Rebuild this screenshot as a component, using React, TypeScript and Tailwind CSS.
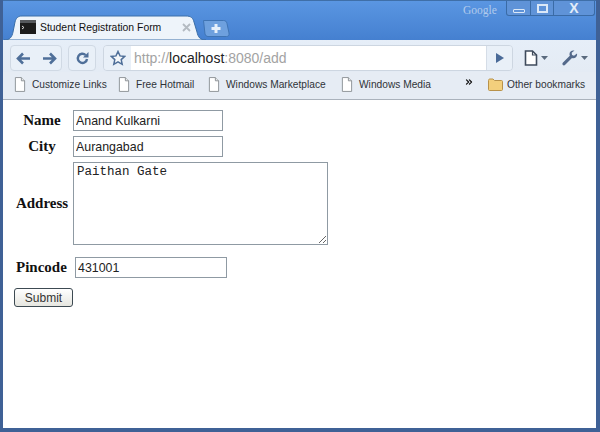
import { ChevronsRight } from 'lucide-react'

function TerminalIcon() {
  return (
    <svg width="16" height="14" viewBox="0 0 16 14" aria-hidden="true">
      <rect x="0" y="0" width="16" height="14" fill="#1c1c1c" />
      <rect x="0" y="0" width="16" height="3" fill="#55585c" />
      <path d="M2 6l2 1.500L2 9" fill="none" stroke="#ddd" strokeWidth="1" />
    </svg>
  )
}

function PageIcon({ size = 12 }: { size?: number }) {
  return (
    <svg width={size} height={size * 1.25} viewBox="0 0 13 16" aria-hidden="true">
      <path d="M1.500.5h6.500l3.500 3.500v11.500h-10z" fill="#fff" stroke="#8a8f94" />
      <path d="M8 .5v3.500h3.500" fill="#e6e8ea" stroke="#8a8f94" />
    </svg>
  )
}

function FolderIcon() {
  return (
    <svg width="15" height="13" viewBox="0 0 15 13" aria-hidden="true">
      <path d="M.5 2.500c0-1 .5-1.500 1.500-1.500h3l1.500 1.500h7c.6 0 1 .4 1 1v8c0 .6-.4 1-1 1h-12c-.6 0-1-.4-1-1z" fill="#f3cf7c" stroke="#b8924a" />
    </svg>
  )
}

function Bookmark({ label, width }: { label: string; width: string }) {
  return (
    <div className={`flex items-center gap-[6px] ${width}`}>
      <PageIcon />
      <span className="whitespace-nowrap text-[10.2px] text-[#2f3338]">{label}</span>
    </div>
  )
}

function Toolbar() {
  return (
    <div className="flex h-[32px] items-center bg-gradient-to-b from-[#e6eef8] to-[#e4ebf4] pl-[7px] pt-[4px]">
      {/* back / forward */}
      <div className="flex h-[26px] w-[52px] items-center justify-center gap-[11px] rounded-[4px] border border-[#d0d9e4] bg-[#e9f0f8]">
        <svg width="15" height="13" viewBox="0 0 15 13" aria-hidden="true">
          <path d="M7 1.500L2 6.500l5 5M2.500 6.500H14" fill="none" stroke="#4f6f99" strokeWidth="2.600" />
        </svg>
        <svg width="15" height="13" viewBox="0 0 15 13" aria-hidden="true">
          <path d="M8 1.500l5 5-5 5M12.500 6.500H1" fill="none" stroke="#4f6f99" strokeWidth="2.600" />
        </svg>
      </div>
      {/* reload */}
      <div className="ml-[6px] flex h-[26px] w-[28px] items-center justify-center rounded-[4px] border border-[#d0d9e4] bg-[#e9f0f8]">
        <svg width="15" height="15" viewBox="0 0 15 15" aria-hidden="true">
          <path d="M12 8a4.600 4.600 0 1 1-1.400-4" fill="none" stroke="#4f6f99" strokeWidth="2.400" />
          <path d="M13.500 1v5.500H8z" fill="#4f6f99" />
        </svg>
      </div>
      {/* address bar */}
      <div className="ml-[7px] flex h-[26px] w-[410px] items-stretch overflow-hidden rounded-[4px] border border-[#cdd6e1]">
        <div className="flex w-[27px] items-center justify-center bg-[#e9f0f8]">
          <svg width="16" height="16" viewBox="0 0 16 16" aria-hidden="true">
            <path d="M8 1.500l2 4.400 4.700.5-3.500 3.200 1 4.700L8 11.900l-4.200 2.400 1-4.700L1.300 6.400l4.700-.5z" fill="#f4f7fa" stroke="#4f6f99" strokeWidth="1.500" />
          </svg>
        </div>
        <div className="flex flex-1 items-center bg-white pl-[3px] text-[14px]">
          <span className="text-[#a3a3a3]">http://</span>
          <span className="text-[#222]">localhost</span>
          <span className="text-[#a3a3a3]">:8080/add</span>
        </div>
        <div className="flex w-[26px] items-center justify-center border-l border-[#d5dde7] bg-[#e9f0f8]">
          <svg width="10" height="12" viewBox="0 0 10 12" aria-hidden="true">
            <path d="M1 1l8 5-8 5z" fill="#4a6a98" />
          </svg>
        </div>
      </div>
      {/* page menu */}
      <div className="ml-[11px] flex items-center gap-[3px]">
        <svg width="14" height="16" viewBox="0 0 14 16" aria-hidden="true">
          <path d="M1.500 1h7l4 4v10h-11z" fill="#fff" stroke="#3f4b5c" strokeWidth="1.600" />
          <path d="M8.500 1v4h4" fill="none" stroke="#3f4b5c" strokeWidth="1.200" />
        </svg>
        <svg width="7" height="4" viewBox="0 0 7 4" aria-hidden="true">
          <path d="M0 0h7L3.500 4z" fill="#5a6a7e" />
        </svg>
      </div>
      {/* wrench menu */}
      <div className="ml-[14px] flex items-center gap-[3px]">
        <svg width="16" height="16" viewBox="0 0 16 16" aria-hidden="true">
          <path d="M15 3.500l-3 2.300-2-.8-.3-2.200L12.500.6C10-.2 7.600 1.300 7.500 4c0 .7.1 1.200.3 1.700L1 12.500c-.8.8-.8 1.700-.2 2.400.7.7 1.700.6 2.400-.1L10 8c2.800.9 5.700-1.400 5-4.500z" fill="#54698a" />
        </svg>
        <svg width="7" height="4" viewBox="0 0 7 4" aria-hidden="true">
          <path d="M0 0h7L3.500 4z" fill="#5a6a7e" />
        </svg>
      </div>
    </div>
  )
}

function BookmarksBar() {
  return (
    <div className="flex h-[28px] items-center border-b border-[#aab2bc] bg-[#e6ecf4] pb-[2px] pl-[11px]">
      <Bookmark label="Customize Links" width="w-[104px]" />
      <Bookmark label="Free Hotmail" width="w-[90px]" />
      <Bookmark label="Windows Marketplace" width="w-[133px]" />
      <Bookmark label="Windows Media" width="w-[123px]" />
      <ChevronsRight size={10} strokeWidth={3} className="mb-[5px] text-[#111]" />
      <div className="ml-[14px] flex items-center gap-[4px]">
        <FolderIcon />
        <span className="whitespace-nowrap text-[10.2px] text-[#2f3338]">Other bookmarks</span>
      </div>
    </div>
  )
}

function TitleBar() {
  return (
    <div className="flex h-[40px] items-start border-t border-[#3f6fa8] bg-gradient-to-b from-[#5a96e2] to-[#4580d0]">
      {/* active tab */}
      <div className="relative ml-[1px] mt-[14px] flex h-[25px] w-[203px] items-center pl-[16px] pr-[12px]">
        <svg className="absolute inset-0" width="203" height="25" viewBox="0 0 203 25" aria-hidden="true">
          <path d="M0 25c6 0 8-3 9-8l2-10c1-4 3-6 7-6h164c5 0 7 2 8 6l3 10c1 5 3 8 9 8z" fill="#eef4fa" stroke="#3a6ea8" />
        </svg>
        <div className="relative flex w-full items-center">
          <TerminalIcon />
          <span className="ml-[4px] flex-1 whitespace-nowrap text-[10.4px] text-[#111]">Student Registration Form</span>
          <svg width="9" height="9" viewBox="0 0 9 9" aria-hidden="true" className="mr-[4px]">
            <path d="M1 1l7 7M8 1l-7 7" stroke="#b4bbc2" strokeWidth="1.800" />
          </svg>
        </div>
      </div>
      {/* new tab */}
      <svg width="27" height="17" viewBox="0 0 27 17" aria-hidden="true" className="relative -ml-[4px] mt-[19px]">
        <path d="M.5.5h20c2 0 3 1 3.500 3L26 13c.3 2-.5 3.500-2.500 3.500H5c-1.500 0-2.500-1-3-2.500z" fill="#6ea0de" stroke="#3f74b4" />
        <path d="M13 4v9M8.500 8.500h9" stroke="#e6f0fb" strokeWidth="3" />
      </svg>
      <span className="ml-[233px] mt-[1px] font-['Liberation_Serif',serif] text-[11.5px] text-[#b2cbec]">Google</span>
      {/* window buttons */}
      <div className="ml-auto mr-[1px] flex h-[15px] w-[89px] items-stretch rounded-b-[3px] border border-t-0 border-[#3a6ba6] bg-[#5f93d8]">
        <div className="flex w-[23px] items-end justify-center pb-[2px]">
          <div className="h-[4px] w-[12px] rounded-[1px] border border-[#dbe8f7]" />
        </div>
        <div className="flex w-[24px] items-center justify-center border-x border-[#3a6ba6]">
          <div className="h-[9px] w-[11px] border-2 border-[#dbe8f7]" />
        </div>
        <div className="flex flex-1 items-center justify-center text-[14px] font-bold leading-none text-[#e3edf9]">X</div>
      </div>
    </div>
  )
}

const inputClass = "border border-[#8f9aa3] bg-white px-[2px] text-[12.4px] font-normal text-[#222] outline-none font-['Liberation_Sans',sans-serif]"

function RegistrationForm() {
  return (
    <form className="bg-white pl-[11px] pt-[10px] font-['Liberation_Serif',serif] text-[15px] font-bold leading-none text-[#111]">
      <div className="grid grid-cols-[59px_auto] justify-start gap-y-[5px]">
        <label className="self-center pr-[3px] text-center">Name</label>
        <input readOnly value="Anand Kulkarni" className={`h-[21px] w-[150px] ${inputClass}`} />
        <label className="self-center pr-[3px] text-center">City</label>
        <input readOnly value="Aurangabad" className={`h-[21px] w-[150px] ${inputClass}`} />
        <label className="self-center pr-[3px] text-center">Address</label>
        <textarea
          readOnly
          value="Paithan Gate"
          className="block h-[83px] w-[255px] border border-[#8f9aa3] bg-white px-[3px] pt-[2px] font-['Liberation_Mono',monospace] text-[12.5px] font-normal leading-[15px] text-[#222] outline-none"
        />
      </div>
      <div className="mt-[12px] flex items-center pl-[2px]">
        <label className="w-[59px]">Pincode</label>
        <input readOnly value="431001" className={`h-[21px] w-[152px] ${inputClass}`} />
      </div>
      <button
        type="button"
        className="mt-[10px] block h-[19px] w-[59px] rounded-[3px] border border-[#3d4a52] bg-gradient-to-b from-white to-[#e6e6e0] font-['Liberation_Sans',sans-serif] text-[12px] font-normal leading-none text-[#333]"
      >
        Submit
      </button>
    </form>
  )
}

export default function App() {
  return (
    <div className="flex h-[432px] w-[600px] flex-col overflow-hidden border-b-4 border-l-[3px] border-r-4 border-[#3f6196] bg-white font-['Liberation_Sans',sans-serif]">
      <TitleBar />
      <Toolbar />
      <BookmarksBar />
      <RegistrationForm />
    </div>
  )
}
